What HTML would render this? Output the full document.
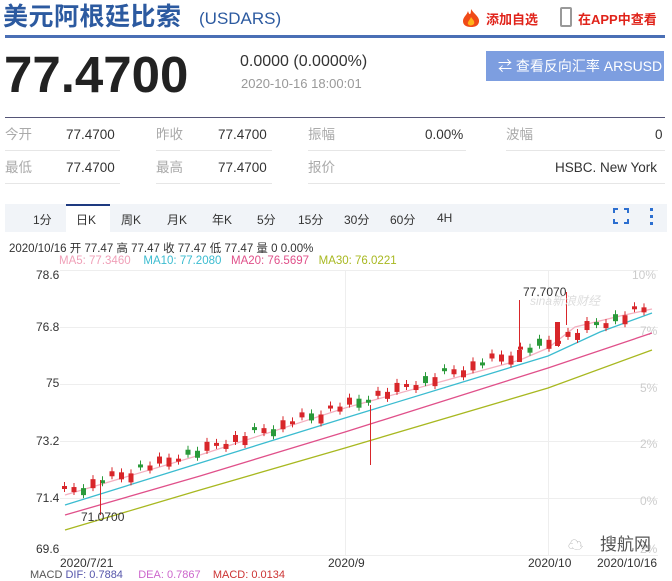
<!DOCTYPE html>
<html><head><meta charset="utf-8"><style>
*{margin:0;padding:0;box-sizing:border-box}
body{width:672px;height:573px;overflow:hidden;background:#fff;font-family:"Liberation Sans","Noto Sans CJK SC",sans-serif;position:relative;color:#333}
.a{position:absolute;white-space:nowrap}
.r .a{line-height:16px;height:16px}
</style></head><body>
<div class="a" style="left:3px;top:1px;font-size:25px;line-height:32px;font-weight:bold;color:#2c5aa0;letter-spacing:0.5px">美元阿根廷比索</div>
<div class="a" style="left:199px;top:9px;font-size:17px;color:#2c5aa0">(USDARS)</div>
<svg class="a" style="left:460px;top:8px" width="22" height="20"><path d="M11 1 C14 6 20 9 19 14 C18 18 15 19 11 19 C6 19 3 17 3 13 C3 9 7 7 8 3 C9 7 11 8 11 1Z" fill="#f04a17"/><path d="M11 9 C13 12 15 13 14 16 C12 18 9 18 8 16 C7 14 10 12 11 9Z" fill="#ffb21a"/></svg>
<div class="a" style="left:486px;top:9px;font-size:13px;font-weight:bold;color:#e0231a">添加自选</div>
<div class="a" style="left:560px;top:7px;width:12px;height:20px;border:2px solid #999;border-radius:2px"></div>
<div class="a" style="left:578px;top:9px;font-size:13px;font-weight:bold;color:#e0231a">在APP中查看</div>
<div class="a" style="left:5px;top:35px;width:660px;height:3px;background:#4a6fb5"></div>
<div class="a" style="left:4px;top:45px;font-size:51px;font-weight:bold;color:#222">77.4700</div>
<div class="a" style="left:240px;top:53px;font-size:16px;color:#333">0.0000 (0.0000%)</div>
<div class="a" style="left:241px;top:76px;font-size:13px;color:#999">2020-10-16 18:00:01</div>
<div class="a" style="left:486px;top:51px;width:178px;height:30px;background:#7d9ee0;color:#fff;font-size:14px;line-height:30px;padding-left:12px">⇄ 查看反向汇率 ARSUSD</div>
<div class="a" style="left:5px;top:117px;width:660px;height:1px;background:#557"></div>
<div class="r" style="font-size:13.5px">
<div class="a" style="left:5px;top:127px;color:#aaa">今开</div><div class="a" style="left:66px;top:127px">77.4700</div>
<div class="a" style="left:156px;top:127px;color:#aaa">昨收</div><div class="a" style="left:218px;top:127px">77.4700</div>
<div class="a" style="left:308px;top:127px;color:#aaa">振幅</div><div class="a" style="left:425px;top:127px">0.00%</div>
<div class="a" style="left:506px;top:127px;color:#aaa">波幅</div><div class="a" style="left:655px;top:127px">0</div>
<div class="a" style="left:5px;top:160px;color:#aaa">最低</div><div class="a" style="left:66px;top:160px">77.4700</div>
<div class="a" style="left:156px;top:160px;color:#aaa">最高</div><div class="a" style="left:218px;top:160px">77.4700</div>
<div class="a" style="left:308px;top:160px;color:#aaa">报价</div><div class="a" style="left:555px;top:160px">HSBC. New York</div>
</div>
<div class="a" style="left:5px;top:150px;width:115px;height:1px;background:#e6e6e6"></div>
<div class="a" style="left:156px;top:150px;width:116px;height:1px;background:#e6e6e6"></div>
<div class="a" style="left:308px;top:150px;width:158px;height:1px;background:#e6e6e6"></div>
<div class="a" style="left:506px;top:150px;width:159px;height:1px;background:#e6e6e6"></div>
<div class="a" style="left:5px;top:183px;width:115px;height:1px;background:#e6e6e6"></div>
<div class="a" style="left:156px;top:183px;width:116px;height:1px;background:#e6e6e6"></div>
<div class="a" style="left:308px;top:183px;width:357px;height:1px;background:#e6e6e6"></div>
<div class="a" style="left:5px;top:204px;width:662px;height:28px;background:#f1f4f8"></div>
<div class="a" style="left:66px;top:204px;width:44px;height:29px;background:#fff;border-top:2px solid #1e3a80"></div>
<div style="font-size:12px;color:#333">
<div class="a" style="left:33px;top:211px">1分</div><div class="a" style="left:76px;top:211px">日K</div><div class="a" style="left:121px;top:211px">周K</div><div class="a" style="left:167px;top:211px">月K</div><div class="a" style="left:212px;top:211px">年K</div><div class="a" style="left:257px;top:211px">5分</div><div class="a" style="left:298px;top:211px">15分</div><div class="a" style="left:344px;top:211px">30分</div><div class="a" style="left:390px;top:211px">60分</div><div class="a" style="left:437px;top:211px">4H</div>
</div>
<svg class="a" style="left:612px;top:206px" width="50" height="20"><path d="M2 7V3h4M12 3h4v4M16 13v4h-4M6 17H2v-4" stroke="#2c6fd0" stroke-width="2" fill="none"/><rect x="38" y="2" width="3" height="3" fill="#2c6fd0"/><rect x="38" y="9" width="3" height="3" fill="#2c6fd0"/><rect x="38" y="16" width="3" height="3" fill="#2c6fd0"/></svg>
<div class="a" style="left:9px;top:240px;font-size:11.5px;color:#333">2020/10/16 开 77.47 高 77.47 收 77.47 低 77.47 量 0 0.00%</div>
<div class="a" style="left:59px;top:255px;font-size:11.5px"><span style="color:#f0a0b8">MA5: 77.3460</span>&nbsp;&nbsp;&nbsp; <span style="color:#3bbcd0">MA10: 77.2080</span>&nbsp;&nbsp; <span style="color:#e0508a">MA20: 76.5697</span>&nbsp;&nbsp; <span style="color:#a8b820">MA30: 76.0221</span></div>
<svg class="a" style="left:0;top:0" width="672" height="573" id="c">
<g stroke="#eee" stroke-width="1">
<line x1="60" y1="270.5" x2="658" y2="270.5"/><line x1="60" y1="327.5" x2="658" y2="327.5"/><line x1="60" y1="384.5" x2="658" y2="384.5"/><line x1="60" y1="441.5" x2="658" y2="441.5"/><line x1="60" y1="498.5" x2="658" y2="498.5"/><line x1="60" y1="555.5" x2="658" y2="555.5"/>
<line x1="345.5" y1="270" x2="345.5" y2="555"/><line x1="548.5" y1="270" x2="548.5" y2="555"/>
</g>
<g font-size="12" fill="#333" font-family="Liberation Sans">
<text x="36" y="279">78.6</text><text x="36" y="331">76.8</text><text x="46" y="387">75</text><text x="36" y="445">73.2</text><text x="36" y="502">71.4</text><text x="36" y="553">69.6</text>
<text x="60" y="567">2020/7/21</text><text x="328" y="567">2020/9</text><text x="528" y="567">2020/10</text><text x="597" y="567">2020/10/16</text>
</g>
<g font-size="12" fill="#ccc" font-family="Liberation Sans"><text x="632" y="279">10%</text><text x="640" y="335">7%</text><text x="640" y="392">5%</text><text x="640" y="448">2%</text><text x="640" y="505">0%</text><text x="640" y="553">2%</text></g>
<polyline points="65,530 200,490 345,448 548,388 652,350" fill="none" stroke="#a8b820" stroke-width="1.3"/>
<polyline points="65,515 200,476 345,432 548,368 652,333" fill="none" stroke="#e0508a" stroke-width="1.3"/>
<polyline points="65,505 200,463 345,418 548,356 600,332 652,313" fill="none" stroke="#3bbcd0" stroke-width="1.3"/>
<polyline points="65,495 200,455 345,408 520,360 548,348 575,327 620,316 652,309" fill="none" stroke="#f4b0c0" stroke-width="1.3"/>
<g id="k"></g>
<text x="523" y="296" font-size="12" fill="#333">77.7070</text>
<text x="81" y="521" font-size="12" fill="#333">71.0700</text>
<text x="530" y="305" font-size="12" fill="#ddd" font-style="italic">sina新浪财经</text>
<text x="600" y="550" font-size="17" fill="#555">搜航网</text>
<text x="568" y="550" font-size="15" fill="#aaa">☁</text>
</svg>
<div class="a" style="left:30px;top:569px;font-size:11px;color:#555">MACD <span style="color:#55a">DIF: 0.7884</span> &nbsp;&nbsp;&nbsp;&nbsp;<span style="color:#c6c">DEA: 0.7867</span> &nbsp;&nbsp;&nbsp;<span style="color:#c33">MACD: 0.0134</span></div>
<script>
var g=document.getElementById('k'),s='';
for(var i=0;i<62;i++){var x=62+i*9.5;var y=490-(x-62)*0.31+((i*7)%5-2)*2;
var h=3+((i*13)%4)*2;var col=(i%6==2||i%9==4)?'#2a9a3a':'#d8262a';
if(x>580)y-=3;
s+='<line x1="'+(x+2.5)+'" y1="'+(y-4)+'" x2="'+(x+2.5)+'" y2="'+(y+h+3)+'" stroke="'+col+'"/>';
s+='<rect x="'+x+'" y="'+y+'" width="5" height="'+h+'" fill="'+col+'"/>';}
s+='<line x1="100.5" y1="480" x2="100.5" y2="515" stroke="#d8262a"/>';
s+='<line x1="370.5" y1="405" x2="370.5" y2="465" stroke="#d8262a"/>';
s+='<line x1="519.5" y1="300" x2="519.5" y2="360" stroke="#d8262a"/><rect x="517" y="350" width="5" height="12" fill="#d8262a"/>';
s+='<line x1="566.5" y1="292" x2="566.5" y2="325" stroke="#d8262a"/><rect x="555" y="322" width="5" height="24" fill="#d8262a"/>';
g.innerHTML=s;
</script>
</body></html>
